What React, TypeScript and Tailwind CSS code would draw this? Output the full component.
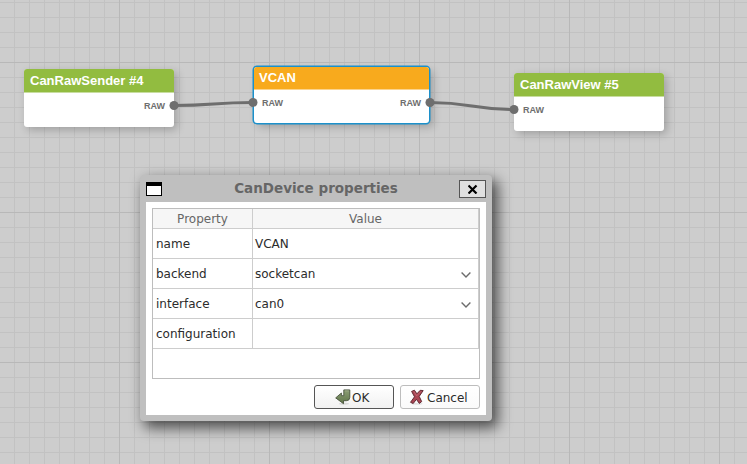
import React from "react";

const gridStyle =
  "bg-[#cdcdcd] bg-[linear-gradient(to_right,#b8b8b8_1px,transparent_1px),linear-gradient(to_bottom,#b8b8b8_1px,transparent_1px),linear-gradient(to_right,#c2c2c2_1px,transparent_1px),linear-gradient(to_bottom,#c2c2c2_1px,transparent_1px)] bg-size-[150px_150px,150px_150px,15px_15px,15px_15px] bg-position-[119px_0,0_62px,14px_0,0_2px]";

type NodeProps = {
  title: string;
  place: string;
  header: string;
  ports: string;
  input?: boolean;
  output?: boolean;
};

function FlowNode({ title, place, header, ports, input, output }: NodeProps) {
  return (
    <div
      className={`absolute flex flex-col rounded-[3px] bg-white font-['Liberation_Sans',Arial,sans-serif] font-bold ${place}`}
    >
      <div className={`rounded-t-[3px] text-[13px] text-white ${header}`}>{title}</div>
      <div className={`flex h-[27px] items-center justify-between text-[9px] text-[#6e6e6e] ${ports}`}>
        <span>{input ? "RAW" : ""}</span>
        <span>{output ? "RAW" : ""}</span>
      </div>
    </div>
  );
}

function Row({ name, value, combo }: { name: string; value: string; combo?: boolean }) {
  return (
    <div className="flex h-[30px] border-b border-[#cdcdcd] text-[12px] text-[#2b2b2b]">
      <div className="flex w-[100px] items-center border-r border-[#cdcdcd] pl-[3px]">{name}</div>
      <div className="flex flex-1 items-center justify-between border-r border-[#cdcdcd] pr-[7px] pl-[2px]">
        <span>{value}</span>
        {combo && (
          <svg width="10" height="6" viewBox="0 0 10 6" className="mt-[2px]" fill="none" stroke="#6c6c6c" strokeWidth="1.4">
            <path d="M.6.5 5 4.9 9.4.5" />
          </svg>
        )}
      </div>
    </div>
  );
}

function OkIcon() {
  return (
    <svg width="16" height="16" viewBox="0 0 16 16">
      <defs>
        <linearGradient id="ok" x1="0" y1="0" x2="0" y2="1">
          <stop offset="0" stopColor="#8b9d74" />
          <stop offset="1" stopColor="#5f7549" />
        </linearGradient>
      </defs>
      <ellipse cx="9" cy="14.8" rx="5" ry="1" fill="#dadada" />
      <path d="M8.800 .9h6v7.400q0 3.400-3.400 3.400H8.500v3L.7 8.900 6.400 4v2.700h2.400z" fill="url(#ok)" stroke="#48543d" strokeWidth=".9" />
      <path d="M9.800 1.900h4" stroke="#a7b594" strokeWidth=".7" />
    </svg>
  );
}

function CancelIcon() {
  return (
    <svg width="16" height="16" viewBox="0 0 16 16">
      <ellipse cx="8" cy="14.8" rx="5.5" ry="1" fill="#e2e2e2" />
      <path
        d="M2.600 2.400 5.400 1.200 7.900 4.800 11.200 1.300 14.200 1.600 10.200 7.400 12.700 12.600 10.300 14.400 7.400 10.300 4.200 14.500 1.500 13.300 5.500 7.800z"
        fill="#aa4654"
        stroke="#572029"
        strokeWidth=".9"
      />
      <path d="m4.700 2.400 3 4.400 4.100-4.200" fill="none" stroke="#c66e79" strokeWidth=".7" />
    </svg>
  );
}

function Dialog() {
  return (
    <div className="absolute top-[175px] left-[140px] flex h-[246px] w-[352px] flex-col rounded-[4px] bg-[#bfbfbf] px-[6px] pb-[6px] font-['DejaVu_Sans',sans-serif] shadow-[5px_6px_14px_1px_rgba(0,0,0,0.62)]">
      <div className="flex h-[27px] items-center justify-between">
        <div className="mt-[1px] h-[14px] w-[16px] border border-t-4 border-black bg-white" />
        <span className="pb-[2px] pl-[11px] text-[13.5px] leading-[18px] font-bold text-[#666]">CanDevice properties</span>
        <div className="mt-[1px] flex h-[18px] w-[27px] items-center justify-center border border-[#555] bg-[#e0e0e0]">
          <svg width="10" height="10" viewBox="0 0 10 10" stroke="#000" strokeWidth="2.2">
            <path d="m.5 1.500 8 8M8.500 1.500 .5 9.500" />
          </svg>
        </div>
      </div>
      <div className="flex flex-1 flex-col bg-white p-[6px]">
        <div className="h-[171px] border border-[#bdbdbd]">
          <div className="flex h-[20px] border-b border-[#cdcdcd] bg-[#f6f6f6] text-[12px] leading-[20px] text-[#666]">
            <div className="w-[100px] border-r border-[#cdcdcd] text-center">Property</div>
            <div className="flex-1 border-r border-[#cdcdcd] text-center">Value</div>
          </div>
          <Row name="name" value="VCAN" />
          <Row name="backend" value="socketcan" combo />
          <Row name="interface" value="can0" combo />
          <Row name="configuration" value="" />
        </div>
        <div className="mt-[6px] flex justify-end gap-[6px] text-[12px] text-[#2b2b2b]">
          <button className="flex h-[24px] w-[80px] items-center rounded-[3px] border border-[#555] bg-linear-to-b from-white to-[#f1f1f1] pl-[20px]">
            <OkIcon />
            <span className="pt-[2px] pl-[1px]">OK</span>
          </button>
          <button className="flex h-[24px] w-[80px] items-center rounded-[3px] border border-[#bdbdbd] bg-linear-to-b from-white to-[#fafafa] pl-[8px]">
            <CancelIcon />
            <span className="pt-[2px] pl-[2px]">Cancel</span>
          </button>
        </div>
      </div>
    </div>
  );
}

export default function App() {
  return (
    <div className={`relative h-[464px] w-[747px] overflow-hidden ${gridStyle}`}>
      <FlowNode
        title="CanRawSender #4"
        place="left-[24px] top-[69px] h-[58px] w-[150px] shadow-[3px_3px_8px_rgba(0,0,0,0.22)]"
        header="h-[24px] leading-[23px] bg-[#92bc40] pl-[6px] border-b border-[#c8dda0]"
        ports="px-[9px]"
        output
      />
      <FlowNode
        title="VCAN"
        place="left-[254px] top-[67px] h-[56px] w-[175px] shadow-[0_0_0_1.5px_#1c90ca,4px_4px_8px_rgba(0,0,0,0.22)]"
        header="h-[23px] leading-[21px] bg-[#f8aa1d] pl-[5px] border-b border-[#fbd48e]"
        ports="px-[8px]"
        input
        output
      />
      <FlowNode
        title="CanRawView #5"
        place="left-[514px] top-[73px] h-[58px] w-[150px] shadow-[3px_3px_8px_rgba(0,0,0,0.22)]"
        header="h-[24px] leading-[23px] bg-[#92bc40] pl-[6px] border-b border-[#c8dda0]"
        ports="px-[9px]"
        input
      />
      <svg className="absolute inset-0" width="747" height="464" fill="none" stroke="#6e6e6e" strokeWidth="3">
        <path d="M174 105.5C214 105.5 213 102.5 253 102.5M430 102.5C472 102.5 472 109.5 514 109.5" />
        <g fill="#6e6e6e" stroke="none">
          <circle cx="174" cy="105.5" r="4.5" />
          <circle cx="253" cy="102.5" r="4.5" />
          <circle cx="430" cy="102.5" r="4.5" />
          <circle cx="514" cy="109.5" r="4.5" />
        </g>
      </svg>
      <Dialog />
    </div>
  );
}
